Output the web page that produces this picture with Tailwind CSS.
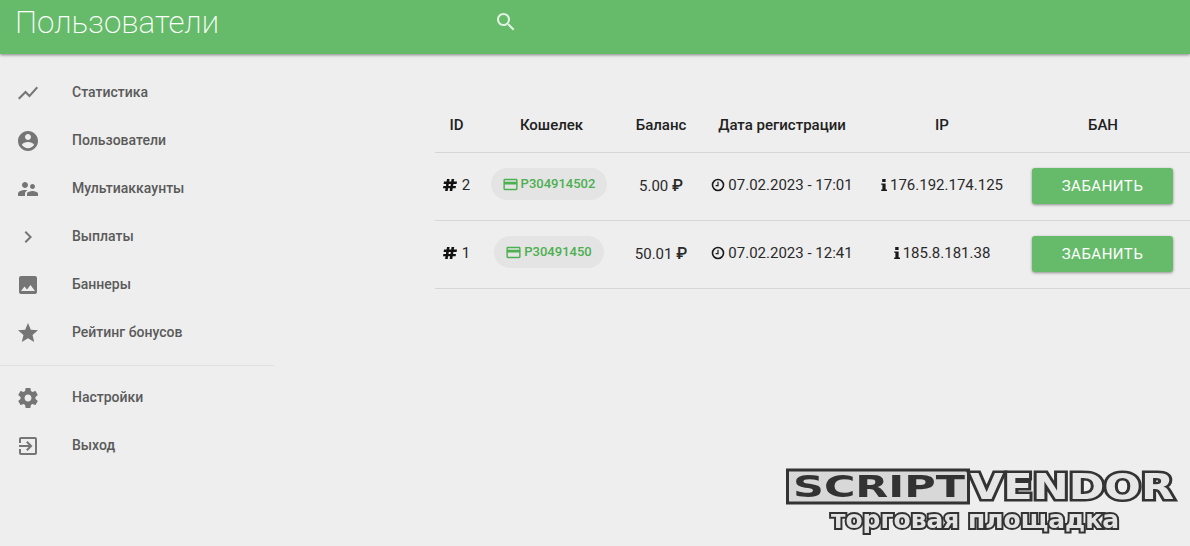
<!DOCTYPE html>
<html lang="ru">
<head>
  <meta charset="UTF-8" />
  <meta name="viewport" content="width=device-width, initial-scale=1.0" />
  <title>Пользователи</title>
  <script src="https://cdn.jsdelivr.net/npm/@tailwindcss/browser@4"></script>
</head>
<body class="relative h-[546px] overflow-hidden bg-[#eeeeee] font-['Roboto',sans-serif]">
  <!-- Header -->
  <header class="relative z-10 flex h-[54px] items-start bg-[#66bb6a] shadow-[0_1px_3px_rgba(0,0,0,0.45)]">
    <h1 class="w-[494px] pl-[15px] pt-[3px] text-[31.3px] leading-10 font-extralight text-white">Пользователи</h1>
    <svg class="mt-[10px] h-6 w-6 fill-white/80" viewBox="0 0 24 24"><path d="M15.5 14h-.79l-.28-.27C15.41 12.59 16 11.11 16 9.5 16 5.91 13.09 3 9.5 3S3 5.91 3 9.5 5.91 16 9.5 16c1.61 0 3.09-.59 4.23-1.57l.27.28v.79l5 4.99L20.49 19l-4.99-5zm-6 0C7.01 14 5 11.99 5 9.5S7.01 5 9.5 5 14 7.01 14 9.5 11.99 14 9.5 14z"/></svg>
  </header>

  <div class="flex">
    <!-- Sidebar -->
    <aside class="w-[274px] shrink-0 pt-[15px] text-[14px] font-medium text-[#5a5a5a]">
      <a href="#" class="flex h-12 items-center gap-8 pl-4">
        <svg class="h-6 w-6 fill-[#757575]" viewBox="0 0 24 24"><path d="M3.5 18.49l6-6.01 4 4L22 6.92l-1.41-1.41-7.09 7.97-4-4L2 16.99z"/></svg>
        <span class="pb-[2px]">Статистика</span>
      </a>
      <a href="#" class="flex h-12 items-center gap-8 pl-4">
        <svg class="h-6 w-6 fill-[#757575]" viewBox="0 0 24 24"><path d="M12 2C6.48 2 2 6.48 2 12s4.48 10 10 10 10-4.48 10-10S17.52 2 12 2zm0 3c1.66 0 3 1.34 3 3s-1.34 3-3 3-3-1.34-3-3 1.34-3 3-3zm0 14.2c-2.5 0-4.71-1.28-6-3.22.03-1.99 4-3.08 6-3.08 1.99 0 5.97 1.09 6 3.08-1.29 1.94-3.5 3.22-6 3.22z"/></svg>
        <span class="pb-[2px]">Пользователи</span>
      </a>
      <a href="#" class="flex h-12 items-center gap-8 pl-4">
        <svg class="h-6 w-6 fill-[#757575]" viewBox="0 0 24 24"><path d="M16.5 12c1.38 0 2.49-1.12 2.49-2.5S17.88 7 16.5 7C15.12 7 14 8.12 14 9.5s1.12 2.5 2.5 2.5zM9 11c1.66 0 2.99-1.34 2.99-3S10.66 5 9 5C7.34 5 6 6.34 6 8s1.34 3 3 3zm7.5 3c-1.83 0-5.5.92-5.5 2.75V19h11v-2.25c0-1.83-3.67-2.75-5.5-2.75zM9 13c-2.33 0-7 1.17-7 3.5V19h7v-2.25c0-.85.33-2.34 2.37-3.47C10.5 13.1 9.66 13 9 13z"/></svg>
        <span class="pb-[2px]">Мультиаккаунты</span>
      </a>
      <a href="#" class="flex h-12 items-center gap-8 pl-4">
        <svg class="h-6 w-6 fill-[#757575]" viewBox="0 0 24 24"><path d="M10 6L8.59 7.41 13.17 12l-4.58 4.59L10 18l6-6z"/></svg>
        <span class="pb-[2px]">Выплаты</span>
      </a>
      <a href="#" class="flex h-12 items-center gap-8 pl-4">
        <svg class="h-6 w-6 fill-[#757575]" viewBox="0 0 24 24"><path d="M21 19V5c0-1.1-.9-2-2-2H5c-1.1 0-2 .9-2 2v14c0 1.1.9 2 2 2h14c1.1 0 2-.9 2-2zM8.5 13.5l2.5 3.01L14.5 12l4.5 6H5l3.5-4.5z"/></svg>
        <span class="pb-[2px]">Баннеры</span>
      </a>
      <a href="#" class="flex h-12 items-center gap-8 pl-4">
        <svg class="h-6 w-6 fill-[#757575]" viewBox="0 0 24 24"><path d="M12 17.27L18.18 21l-1.64-7.03L22 9.24l-7.19-.61L12 2 9.19 8.63 2 9.24l5.46 4.73L5.82 21z"/></svg>
        <span class="pb-[2px]">Рейтинг бонусов</span>
      </a>
      <div class="my-2 h-px bg-[#e0e0e0]"></div>
      <a href="#" class="flex h-12 items-center gap-8 pl-4">
        <svg class="h-6 w-6 fill-[#757575]" viewBox="0 0 24 24"><path d="M19.43 12.98c.04-.32.07-.64.07-.98s-.03-.66-.07-.98l2.11-1.65c.19-.15.24-.42.12-.64l-2-3.46c-.12-.22-.39-.3-.61-.22l-2.49 1c-.52-.4-1.08-.73-1.69-.98l-.38-2.65C14.46 2.18 14.25 2 14 2h-4c-.25 0-.46.18-.49.42l-.38 2.65c-.61.25-1.17.59-1.69.98l-2.49-1c-.23-.09-.49 0-.61.22l-2 3.46c-.13.22-.07.49.12.64l2.11 1.65c-.04.32-.07.65-.07.98s.03.66.07.98l-2.11 1.65c-.19.15-.24.42-.12.64l2 3.46c.12.22.39.3.61.22l2.49-1c.52.4 1.08.73 1.69.98l.38 2.65c.03.24.24.42.49.42h4c.25 0 .46-.18.49-.42l.38-2.65c.61-.25 1.17-.59 1.69-.98l2.49 1c.23.09.49 0 .61-.22l2-3.46c.12-.22.07-.49-.12-.64l-2.11-1.65zM12 15.5c-1.93 0-3.5-1.57-3.5-3.5s1.57-3.5 3.5-3.5 3.5 1.57 3.5 3.5-1.57 3.5-3.5 3.5z"/></svg>
        <span class="pb-[2px]">Настройки</span>
      </a>
      <a href="#" class="flex h-12 items-center gap-8 pl-4">
        <svg class="h-6 w-6 fill-[#757575]" viewBox="0 0 24 24"><path d="M10.09 15.59L11.5 17l5-5-5-5-1.41 1.41L12.67 11H3v2h9.67l-2.58 2.59zM19 3H5c-1.11 0-2 .9-2 2v4h2V5h14v14H5v-4H3v4c0 1.1.89 2 2 2h14c1.1 0 2-.9 2-2V5c0-1.1-.9-2-2-2z"/></svg>
        <span class="pb-[2px]">Выход</span>
      </a>
    </aside>

    <!-- Table -->
    <main class="pl-[161px] pt-[42px]">
      <table class="w-[755px] table-fixed border-collapse text-center text-[15px] text-[#2a2a2a]">
        <colgroup>
          <col class="w-[43px]" /><col class="w-[142px]" /><col class="w-[82px]" /><col class="w-[160px]" /><col class="w-[160px]" /><col />
        </colgroup>
        <thead>
          <tr class="h-[56px] border-b border-[#d6d6d6] text-[15px] text-[#212121]">
            <th class="pt-[2px] font-medium">ID</th>
            <th class="pl-[5px] pt-[2px] font-medium">Кошелек</th>
            <th class="pt-[2px] font-medium">Баланс</th>
            <th class="pt-[2px] font-medium">Дата регистрации</th>
            <th class="pt-[2px] font-medium">IP</th>
            <th class="pr-[6px] pt-[2px] font-medium">БАН</th>
          </tr>
        </thead>
        <tbody>
          <tr class="h-[68px] border-b border-[#d6d6d6]">
            <td>
              <span class="inline-flex items-center gap-[5px]">
                <svg class="h-[14px] w-[14px] fill-[#111111]" viewBox="0 0 14 14"><path d="M4 1h2.6l-.4 2.6h2L8.6 1h2.6l-.4 2.6H14l-.4 2.3h-3.2l-.3 2.1H13l-.4 2.3H9.7L9.3 13H6.7l.4-2.7h-2L4.7 13H2.1l.4-2.7H0l.4-2.3h2.5l.3-2.1H.6l.4-2.3h2.6zM5.8 5.9 5.5 8h2l.3-2.1z"/></svg>
                2
              </span>
            </td>
            <td>
              <span class="relative -top-[2px] inline-flex h-8 items-center gap-[2px] rounded-full bg-[#e4e4e4] pl-[11px] pr-3 text-[13px] font-medium text-[#4caf50]">
                <svg class="h-[17px] w-[17px] fill-[#4caf50]" viewBox="0 0 24 24"><path d="M20 4H4c-1.11 0-1.99.89-1.99 2L2 18c0 1.11.89 2 2 2h16c1.11 0 2-.89 2-2V6c0-1.11-.89-2-2-2zm0 14H4v-6h16v6zm0-10H4V6h16v2z"/></svg>
                P304914502
              </span>
            </td>
            <td>5.00 <span class="text-[16px] font-medium">₽</span></td>
            <td>
              <span class="inline-flex items-center gap-[3px]">
                <svg class="h-[14px] w-[14px]" viewBox="0 0 14 14" fill="none" stroke="#1a1a1a"><circle cx="7" cy="7" r="5.5" stroke-width="1.6"/><path d="M7 3.8V7.6H4.6" stroke-width="1.2"/></svg>
                07.02.2023 - 17:01
              </span>
            </td>
            <td>
              <span class="inline-flex items-center gap-[3px]">
                <svg class="h-[14px] w-[6px] fill-[#1a1a1a]" viewBox="0 0 6 14"><rect x="1.2" y="1" width="3.4" height="3" /><path d="M0.2 5.4H4.6V11.6H6V13H0.2V11.6H1.4V6.8H0.2z"/></svg>
                176.192.174.125
              </span>
            </td>
            <td class="pr-[7px]">
              <button class="h-9 w-[141px] rounded-[3px] bg-[#66bb6a] text-[15px] tracking-[0.5px] text-white shadow-[0_1px_3px_rgba(0,0,0,0.4)]">ЗАБАНИТЬ</button>
            </td>
          </tr>
          <tr class="h-[68px] border-b border-[#d6d6d6]">
            <td>
              <span class="inline-flex items-center gap-[5px]">
                <svg class="h-[14px] w-[14px] fill-[#111111]" viewBox="0 0 14 14"><path d="M4 1h2.6l-.4 2.6h2L8.6 1h2.6l-.4 2.6H14l-.4 2.3h-3.2l-.3 2.1H13l-.4 2.3H9.7L9.3 13H6.7l.4-2.7h-2L4.7 13H2.1l.4-2.7H0l.4-2.3h2.5l.3-2.1H.6l.4-2.3h2.6zM5.8 5.9 5.5 8h2l.3-2.1z"/></svg>
                1
              </span>
            </td>
            <td>
              <span class="relative -top-[2px] inline-flex h-8 items-center gap-[2px] rounded-full bg-[#e4e4e4] pl-[11px] pr-3 text-[13px] font-medium text-[#4caf50]">
                <svg class="h-[17px] w-[17px] fill-[#4caf50]" viewBox="0 0 24 24"><path d="M20 4H4c-1.11 0-1.99.89-1.99 2L2 18c0 1.11.89 2 2 2h16c1.11 0 2-.89 2-2V6c0-1.11-.89-2-2-2zm0 14H4v-6h16v6zm0-10H4V6h16v2z"/></svg>
                P30491450
              </span>
            </td>
            <td>50.01 <span class="text-[16px] font-medium">₽</span></td>
            <td>
              <span class="inline-flex items-center gap-[3px]">
                <svg class="h-[14px] w-[14px]" viewBox="0 0 14 14" fill="none" stroke="#1a1a1a"><circle cx="7" cy="7" r="5.5" stroke-width="1.6"/><path d="M7 3.8V7.6H4.6" stroke-width="1.2"/></svg>
                07.02.2023 - 12:41
              </span>
            </td>
            <td>
              <span class="inline-flex items-center gap-[3px]">
                <svg class="h-[14px] w-[6px] fill-[#1a1a1a]" viewBox="0 0 6 14"><rect x="1.2" y="1" width="3.4" height="3" /><path d="M0.2 5.4H4.6V11.6H6V13H0.2V11.6H1.4V6.8H0.2z"/></svg>
                185.8.181.38
              </span>
            </td>
            <td class="pr-[7px]">
              <button class="h-9 w-[141px] rounded-[3px] bg-[#66bb6a] text-[15px] tracking-[0.5px] text-white shadow-[0_1px_3px_rgba(0,0,0,0.4)]">ЗАБАНИТЬ</button>
            </td>
          </tr>
        </tbody>
      </table>
    </main>
  </div>

  <!-- Watermark -->
  <svg class="absolute left-[780px] top-[462px] blur-[0.4px]" width="410" height="84" viewBox="0 0 410 84">
    <rect x="7.5" y="8" width="181" height="33" fill="#d8d8d8" stroke="#333333" stroke-width="3"/>
    <text x="13" y="35" textLength="172" lengthAdjust="spacingAndGlyphs" font-family="DejaVu Sans" font-weight="700" font-size="31" fill="#333333">SCRIPT</text>
    <text x="190" y="37" textLength="204" lengthAdjust="spacingAndGlyphs" font-family="DejaVu Sans" font-weight="700" font-size="35" fill="#e6e6e6" stroke="#333333" stroke-width="5" paint-order="stroke">VENDOR</text>
    <text x="51" y="66" textLength="288" lengthAdjust="spacingAndGlyphs" font-family="DejaVu Sans" font-weight="700" font-size="25" fill="#e2e2e2" stroke="#333333" stroke-width="4" paint-order="stroke">торговая площадка</text>
  </svg>
</body>
</html>
